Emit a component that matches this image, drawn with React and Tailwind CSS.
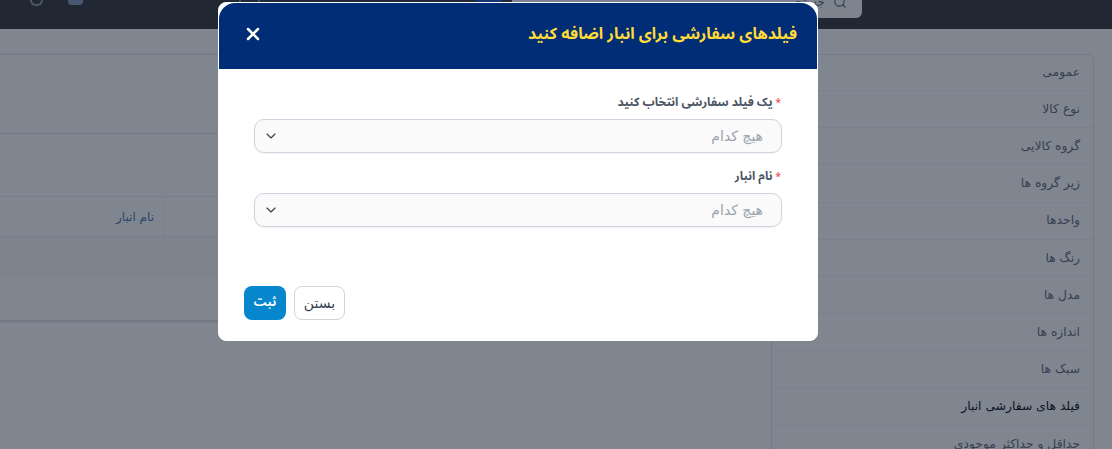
import React from "react";
import { ChevronDown, Search, X } from "lucide-react";

const boldFont = "font-['Noto_Sans_Arabic','DejaVu_Sans',sans-serif] font-bold";

const sideItems = [
  "عمومی",
  "نوع کالا",
  "گروه کالایی",
  "زیر گروه ها",
  "واحدها",
  "رنگ ها",
  "مدل ها",
  "اندازه ها",
  "سبک ها",
  "فیلد های سفارشی انبار",
  "حداقل و حداکثر موجودی",
];

const SelectField = ({ label }) => (
  <div>
    <label className={`flex h-[26px] items-start gap-[3px] pr-[1px] text-[12px] leading-[20px] text-[#4b5563] ${boldFont}`}>
      <span className="text-[10px] text-[#f0616d]">*</span>
      {label}
    </label>
    <div className="flex h-[34px] items-center justify-between rounded-[10px] border border-[#d1d1df] bg-[#fafafb] pr-[18px] pl-[8px] shadow-xs">
      <span className="text-[14px] text-[#9ca3af]">هیچ کدام</span>
      <ChevronDown className="size-[16px] text-[#374151]" strokeWidth={1.75} />
    </div>
  </div>
);

export default function App() {
  return (
    <div
      dir="rtl"
      className="relative h-[449px] w-[1112px] overflow-hidden bg-white font-['DejaVu_Sans',sans-serif]"
    >
      {/* Top bar */}
      <header className="flex h-[29px] items-start bg-[#414345] pr-[250px]">
        <div className="flex h-[18px] w-[350px] items-end gap-[8px] overflow-hidden rounded-b-md bg-[#f9fafb] pr-[15px] pb-[9px]">
          <Search className="size-[14px] shrink-0 text-[#6b7280]" />
          <span className="text-[12px] leading-[14px] text-[#6b7280]">جستجو...</span>
        </div>
        <div className="mr-[10px] h-[2px] w-[27px] bg-[#2a5bb8]" />
        <div className="mr-[215px] h-[2px] w-[21px] border-x-2 border-[#4caf7a]" />
        <div className="mr-[156px] flex gap-[25px]">
          <div className="h-[5px] w-[15px] rounded-b-sm bg-[#8ea3c4]" />
          <div className="h-[6px] w-[13px] rounded-b-full border-2 border-t-0 border-[#9ca3af]" />
        </div>
      </header>

      <div className="flex pt-[25px]">
        {/* Side tabs */}
        <aside className="mr-[18px] h-[500px] w-[323px] shrink-0 rounded-md border border-[#e5e7eb] bg-white">
          {sideItems.map((item, i) => (
            <div
              key={item}
              className={`flex items-center border-b border-[#f1f2f4] pr-[13px] text-[12.3px] ${
                i === 0 ? "h-[36px]" : "h-[37.2px]"
              } ${i === 9 ? "text-[#111827]" : "text-[#6b7280]"}`}
            >
              {item}
            </div>
          ))}
        </aside>

        {/* Table card */}
        <section className="mr-[10px] -ml-[20px] h-[267px] flex-1 border-y border-[#e5e7eb] bg-white shadow">
          <div className="h-[79px] border-b border-[#e5e7eb]" />
          <div className="mt-[62px] flex h-[41px] items-center border-y border-[#eef0f2]">
            <div className="h-full w-[597px] border-l border-[#eef0f2]" />
            <span className="pr-[10px] text-[12px] text-[#5580b5]">نام انبار</span>
          </div>
          <div className="h-[41px] bg-[#f9fafb]" />
        </section>
      </div>

      {/* Overlay */}
      <div className="absolute inset-0 bg-[#010d21]/50" />

      {/* Modal */}
      <div className="absolute top-[2px] left-[218px] h-[339px] w-[600px] overflow-hidden rounded-lg border border-white bg-white">
        <div className="flex h-[66px] items-center justify-between rounded-t-[16px] bg-[#002d75] pr-[20px] pb-[4px] pl-[24px]">
          <h2 className={`text-[16px] text-[#ffdb3a] ${boldFont}`}>
            فیلدهای سفارشی برای انبار اضافه کنید
          </h2>
          <X className="size-[20px] text-white" strokeWidth={3} />
        </div>
        <div className="flex flex-col gap-[14px] px-[35px] pt-[24px]">
          <SelectField label="یک فیلد سفارشی انتخاب کنید" />
          <SelectField label="نام انبار" />
        </div>
        <div className="mt-[59px] flex justify-end gap-[8px] pl-[25px]">
          <button className="h-[34px] w-[51px] rounded-[8px] border border-[#d1d5db] bg-white text-[14px] text-[#374151]">
            بستن
          </button>
          <button className={`h-[34px] w-[42px] rounded-[8px] bg-[#0686cc] text-[12px] text-white ${boldFont}`}>
            ثبت
          </button>
        </div>
      </div>
    </div>
  );
}
